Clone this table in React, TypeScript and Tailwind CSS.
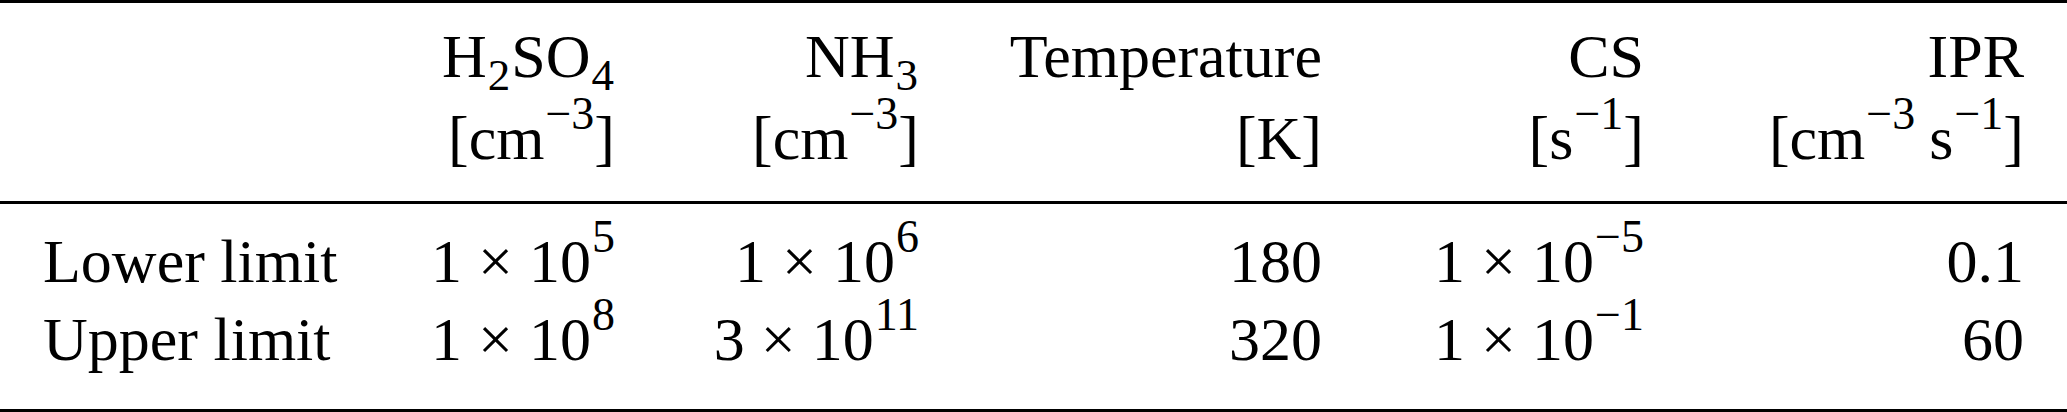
import React from "react";

const Sup = ({ children }: { children: React.ReactNode }) => (
  <span className="relative top-[-30px] text-[46px] leading-none ml-[1px]">{children}</span>
);
const Sub = ({ children }: { children: React.ReactNode }) => (
  <span className="relative top-[13px] text-[45px] leading-none mx-[1px]">{children}</span>
);
const Times = () => <span className="mx-[16px]">×</span>;

const cols = "grid grid-cols-[297px_275px_304px_403px_322px_380px] px-[43px]";

export default function App() {
  return (
    <div className="w-[2067px] h-[412px] bg-white text-black font-['Liberation_Serif','Times_New_Roman',serif] text-[62px]">
      <div className="h-[3px] bg-black" />
      <div className={`${cols} pt-[12px] pb-[22px] leading-[82px]`}>
        <div />
        <div className="text-right">
          <div>
            H<Sub>2</Sub>SO<Sub>4</Sub>
          </div>
          <div>
            [cm<Sup>−3</Sup>]
          </div>
        </div>
        <div className="text-right">
          <div>
            NH<Sub>3</Sub>
          </div>
          <div>
            [cm<Sup>−3</Sup>]
          </div>
        </div>
        <div className="text-right">
          <div>Temperature</div>
          <div>[K]</div>
        </div>
        <div className="text-right">
          <div>CS</div>
          <div>
            [s<Sup>−1</Sup>]
          </div>
        </div>
        <div className="text-right">
          <div>IPR</div>
          <div>
            [cm<Sup>−3</Sup>
            <span className="ml-[14px]">s</span>
            <Sup>−1</Sup>]
          </div>
        </div>
      </div>
      <div className="h-[3px] bg-black" />
      <div className={`${cols} pt-[18px] pb-[31px] leading-[78px]`}>
        <div>Lower limit</div>
        <div className="text-right">
          1<Times />10<Sup>5</Sup>
        </div>
        <div className="text-right">
          1<Times />10<Sup>6</Sup>
        </div>
        <div className="text-right">180</div>
        <div className="text-right">
          1<Times />10<Sup>−5</Sup>
        </div>
        <div className="text-right">0.1</div>

        <div>Upper limit</div>
        <div className="text-right">
          1<Times />10<Sup>8</Sup>
        </div>
        <div className="text-right">
          3<Times />10<Sup>11</Sup>
        </div>
        <div className="text-right">320</div>
        <div className="text-right">
          1<Times />10<Sup>−1</Sup>
        </div>
        <div className="text-right">60</div>
      </div>
      <div className="h-[3px] bg-black" />
    </div>
  );
}
